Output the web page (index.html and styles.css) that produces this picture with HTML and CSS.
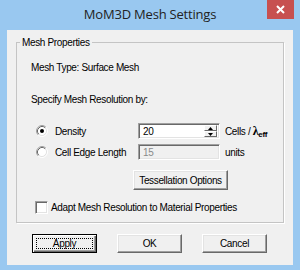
FILE: index.html
```html
<!DOCTYPE html>
<html lang="en">
  <head>
    <meta charset="UTF-8" />
    <title>MoM3D Mesh Settings</title>
    <link rel="stylesheet" href="styles.css">
  </head>
  <body>
    <div class="window">
      <div class="titlebar">
        <div class="title">MoM3D Mesh Settings</div>
        <div class="close">
          <svg width="9" height="9" viewBox="0 0 9 9">
            <path d="M1 1 L8 8 M8 1 L1 8" stroke="#fff" stroke-width="2" />
          </svg>
        </div>
      </div>

      <div class="client">
        <fieldset class="group">
          <legend>Mesh Properties</legend>
          <div class="text-row mesh-type">Mesh Type: Surface Mesh</div>
          <div class="text-row specify">Specify Mesh Resolution by:</div>

          <div class="option density">
            <label class="choice">
              <svg class="radio" width="12" height="12" viewBox="0 0 12 12">
                <circle cx="6" cy="6" r="4.5" fill="#fff" />
                <path d="M2.11 9.89 A5.5 5.5 0 0 1 9.89 2.11" stroke="#a0a0a0" fill="none" />
                <path d="M9.89 2.11 A5.5 5.5 0 0 1 2.11 9.89" stroke="#fff" fill="none" />
                <path d="M2.82 9.18 A4.5 4.5 0 0 1 9.18 2.82" stroke="#696969" fill="none" />
                <path d="M9.18 2.82 A4.5 4.5 0 0 1 2.82 9.18" stroke="#e3e3e3" fill="none" />
                <circle cx="6" cy="6" r="2" fill="#000" />
              </svg>
              Density
            </label>
            <div class="edit">
              <span class="value">20</span>
              <div class="spin">
                <span class="spin-btn"><svg width="5" height="3" viewBox="0 0 5 3"><path d="M2.5 0 L5 3 L0 3 Z" fill="#000" /></svg></span>
                <span class="spin-btn"><svg width="5" height="3" viewBox="0 0 5 3"><path d="M0 0 L5 0 L2.5 3 Z" fill="#000" /></svg></span>
              </div>
            </div>
            <span class="unit">Cells / <b class="lambda">λ<sub>eff</sub></b></span>
          </div>

          <div class="option edge">
            <label class="choice">
              <svg class="radio" width="12" height="12" viewBox="0 0 12 12">
                <circle cx="6" cy="6" r="4.5" fill="#fff" />
                <path d="M2.11 9.89 A5.5 5.5 0 0 1 9.89 2.11" stroke="#a0a0a0" fill="none" />
                <path d="M9.89 2.11 A5.5 5.5 0 0 1 2.11 9.89" stroke="#fff" fill="none" />
                <path d="M2.82 9.18 A4.5 4.5 0 0 1 9.18 2.82" stroke="#696969" fill="none" />
                <path d="M9.18 2.82 A4.5 4.5 0 0 1 2.82 9.18" stroke="#e3e3e3" fill="none" />
              </svg>
              Cell Edge Length
            </label>
            <div class="edit disabled">
              <span class="value">15</span>
            </div>
            <span class="unit units">units</span>
          </div>

          <div class="tess-row">
            <div class="button tess">Tessellation Options</div>
          </div>

          <div class="check-row">
            <span class="checkbox"></span>
            <span>Adapt Mesh Resolution to Material Properties</span>
          </div>
        </fieldset>

        <div class="actions">
          <div class="button default"><span class="focus">Apply</span></div>
          <div class="button">OK</div>
          <div class="button">Cancel</div>
        </div>
      </div>
    </div>
  </body>
</html>
```

FILE: styles.css
```css
:root {
  --frame: #99c8f0;
  --face: #f0f0f0;
  --light: #e3e3e3;
  --shadow: #a0a0a0;
  --dark: #696969;
}

* {
  box-sizing: border-box;
}

body {
  margin: 0;
  background: var(--frame);
  font-family: "Liberation Sans", sans-serif;
  font-size: 10px;
  letter-spacing: -0.35px;
  color: #000;
  white-space: nowrap;
}

.window {
  width: 300px;
  height: 270px;
  display: flex;
  flex-direction: column;
}

/* barre de titre */
.titlebar {
  position: relative;
  height: 30px;
}

.title {
  text-align: center;
  font-family: "Open Sans", sans-serif;
  font-size: 13px;
  letter-spacing: -0.2px;
  line-height: 28px;
  color: #222;
}

/* bouton fermer posé sur la barre */
.close {
  position: absolute;
  top: 0;
  right: 6px;
  width: 27px;
  height: 19px;
  background: #c75050;
  display: flex;
  align-items: center;
  justify-content: center;
}

.close svg {
  display: block;
}

/* zone client */
.client {
  height: 235px;
  margin: 0 7px;
  padding: 0 9px;
  background: var(--face);
  display: flex;
  flex-direction: column;
}

.group {
  margin: 6px 0 0;
  padding: 0 0 8px;
  min-width: 0;
  border: 1px solid #c4c4c4;
  box-shadow: 1px 1px 0 #fff;
}

.group legend {
  margin-left: 3px;
  padding: 0 2px;
  line-height: 13px;
}

.text-row {
  padding-left: 14px;
  height: 14px;
  line-height: 14px;
}

.mesh-type { margin-top: 12px; }
.specify { margin-top: 18px; }

.option {
  display: grid;
  grid-template-columns: 97px 82px auto;
  align-items: center;
  column-gap: 5px;
  padding-left: 19px;
  height: 16px;
}

.density { margin-top: 16px; }
.edge { margin-top: 5px; }

.choice {
  display: flex;
  align-items: center;
  gap: 7px;
}

.radio {
  display: block;
}

/* champs de saisie */
.edit {
  height: 16px;
  background: #fff;
  border: 1px solid;
  border-color: var(--shadow) #fff #fff var(--shadow);
  box-shadow: inset 1px 1px 0 var(--dark), inset -1px -1px 0 var(--light);
  display: flex;
  align-items: center;
  padding: 0 2px 0 4px;
}

.edit .value {
  flex: 1;
}

.edit.disabled {
  background: var(--face);
  color: #8a8a8a;
}

.spin {
  width: 13px;
  height: 12px;
  display: flex;
  flex-direction: column;
}

.spin-btn {
  flex: 1;
  background: var(--face);
  border: 1px solid;
  border-color: #fff var(--dark) var(--dark) #fff;
  display: flex;
  align-items: center;
  justify-content: center;
}

.spin-btn svg {
  display: block;
}

.lambda {
  font-family: "Liberation Serif", serif;
  font-size: 12px;
}

.lambda sub {
  font-family: "Liberation Sans", sans-serif;
  font-size: 8px;
  vertical-align: -2px;
}

.tess-row {
  margin-top: 10px;
  padding-left: 116px;
}

.check-row {
  margin-top: 11px;
  padding-left: 18px;
  height: 13px;
  display: flex;
  align-items: center;
  gap: 3px;
}

.checkbox {
  width: 13px;
  height: 13px;
  background: #fff;
  border: 1px solid;
  border-color: var(--shadow) #fff #fff var(--shadow);
  box-shadow: inset 1px 1px 0 var(--dark), inset -1px -1px 0 var(--light);
}

/* boutons */
.button {
  height: 19px;
  width: 65px;
  background: var(--face);
  border: 1px solid;
  border-color: #fff var(--dark) var(--dark) #fff;
  box-shadow: inset -1px -1px 0 var(--shadow), inset 1px 1px 0 var(--light);
  display: flex;
  align-items: center;
  justify-content: center;
}

.button.tess {
  width: 95px;
  height: 20px;
}

.actions {
  margin-top: 11px;
  padding-left: 16px;
  display: flex;
  gap: 20px;
}

.button.default {
  border: 1px solid #000;
  box-shadow: inset 1px 1px 0 #fff, inset -1px -1px 0 var(--dark), inset -2px -2px 0 var(--shadow);
  padding: 3px;
}

.focus {
  width: 100%;
  height: 100%;
  border: 1px dotted #000;
  display: flex;
  align-items: center;
  justify-content: center;
}
```
